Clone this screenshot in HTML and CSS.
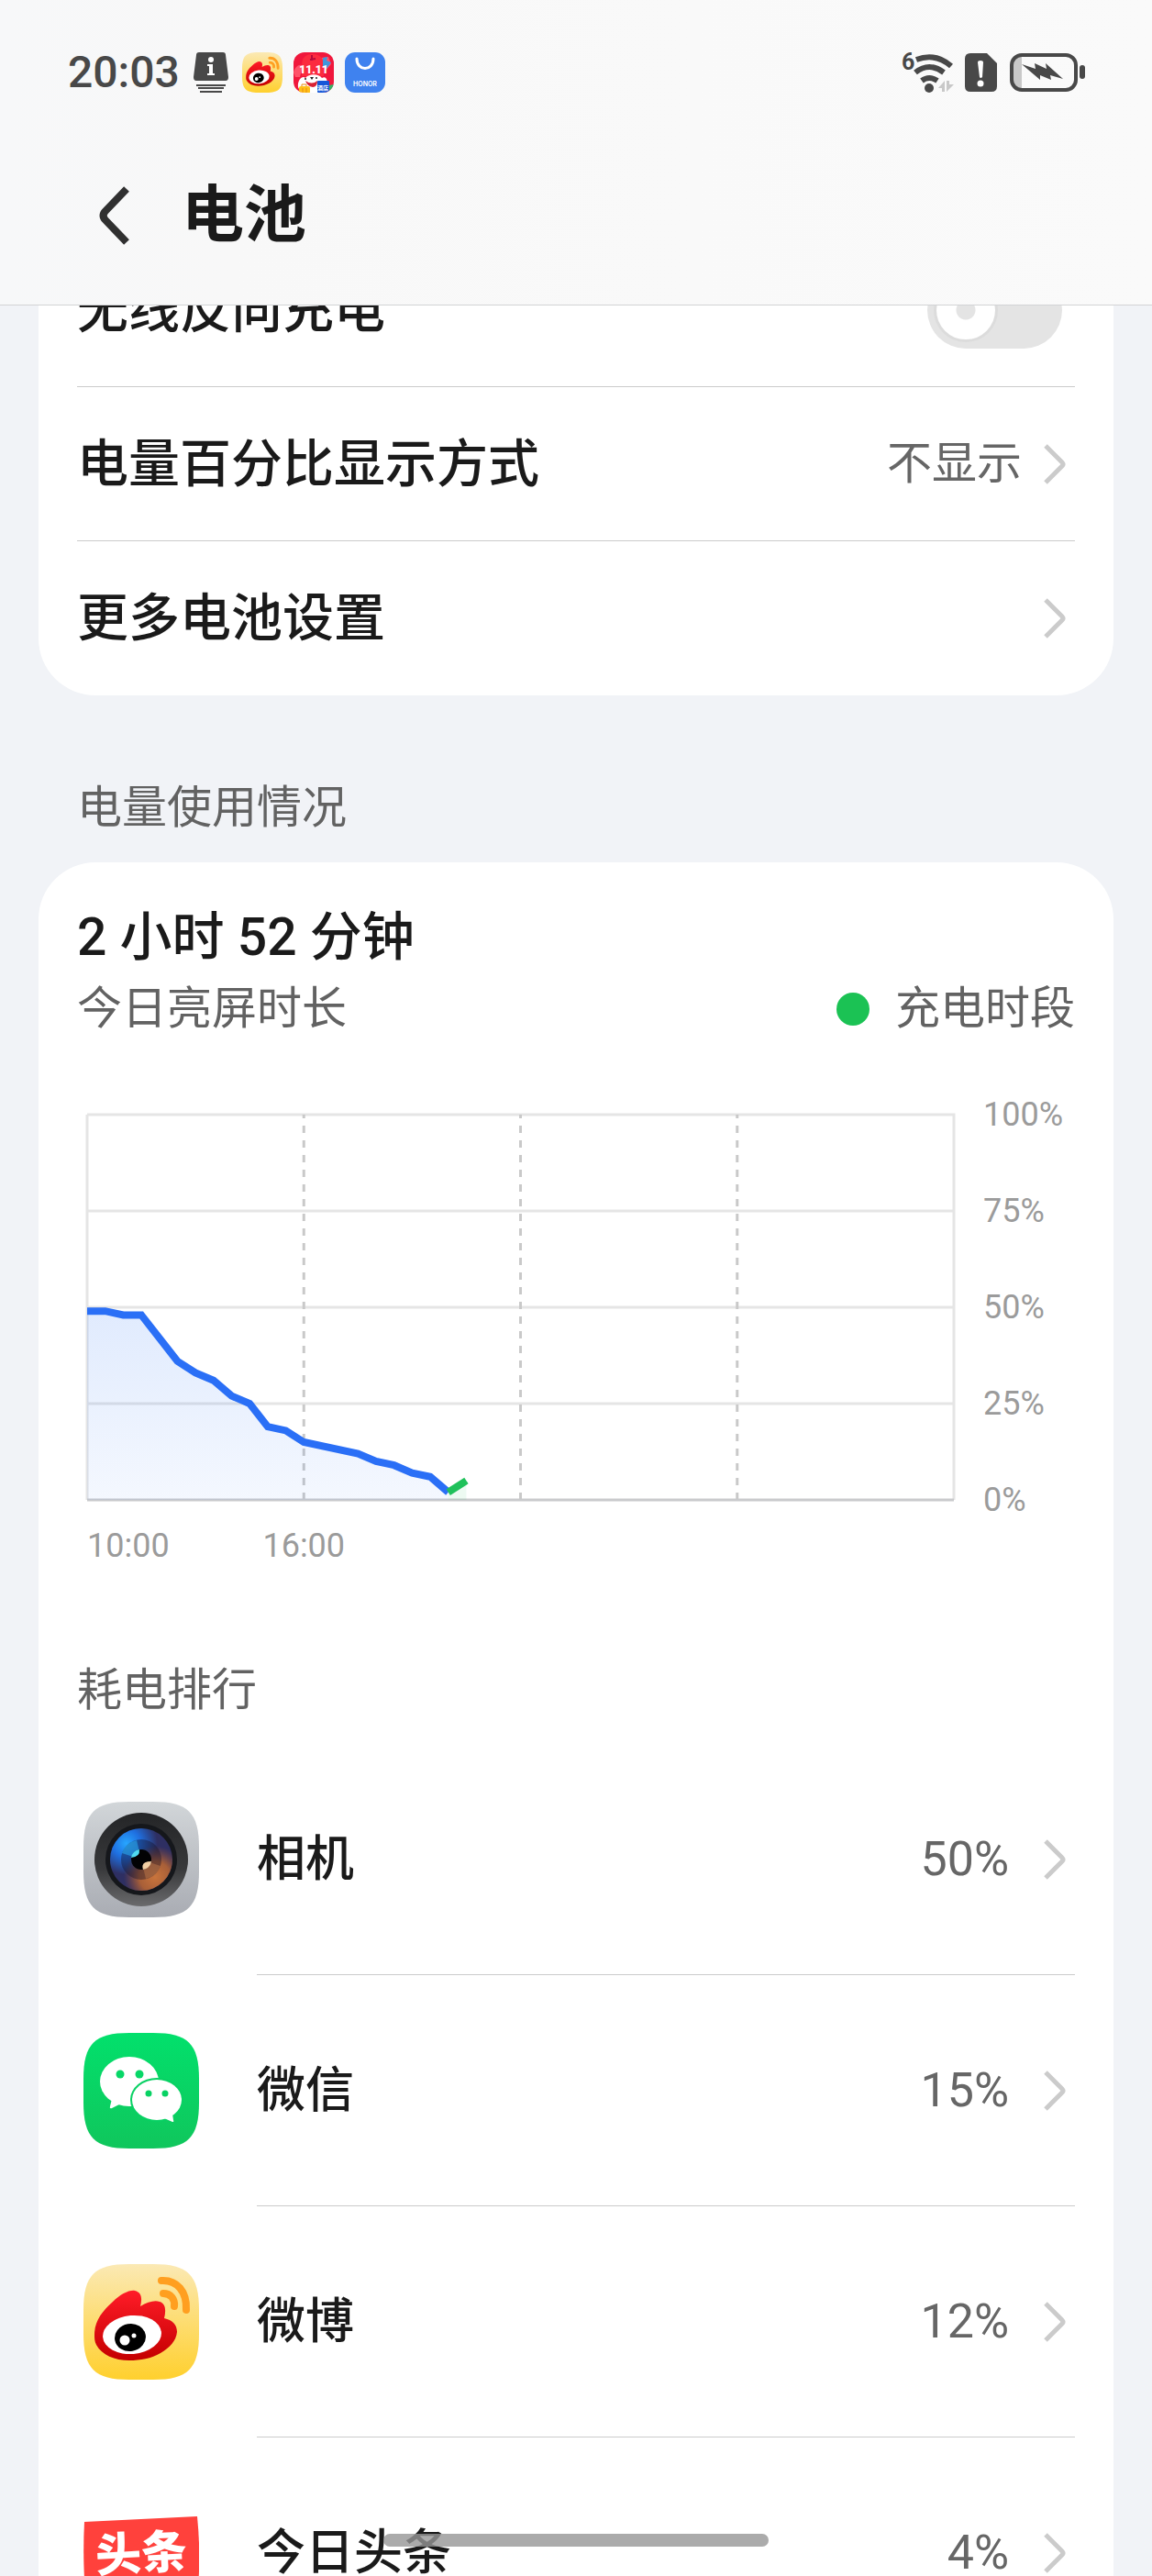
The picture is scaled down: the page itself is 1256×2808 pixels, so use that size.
FILE: index.html
```html
<!DOCTYPE html>
<html lang="zh-CN">
<head>
    <meta charset="UTF-8">
    <meta name="viewport" content="width=device-width, initial-scale=1.0">
    <title>电池</title>
    <link rel="stylesheet" href="styles.css">
</head>
<body>
    <!-- Iconos compartidos -->
    <svg class="sprite" aria-hidden="true">
        <defs>
            <linearGradient id="weiboBg" x1="0" y1="0" x2="0" y2="1">
                <stop offset="0" stop-color="#fbe9b4"/>
                <stop offset="1" stop-color="#ffd02e"/>
            </linearGradient>
            <linearGradient id="weiboRed" x1="0" y1="0" x2="0" y2="1">
                <stop offset="0" stop-color="#ff1c28"/>
                <stop offset="1" stop-color="#c40000"/>
            </linearGradient>
        </defs>
        <symbol id="squircle" viewBox="0 0 126 126">
            <path d="M0 50C0 12 12 0 50 0H76C114 0 126 12 126 50V76C126 114 114 126 76 126H50C12 126 0 114 0 76Z"/>
        </symbol>
        <symbol id="chevron" viewBox="0 0 24 44">
            <path d="M2 2L20 20Q22 22 20 24L2 42" fill="none" stroke="#cbcbcb" stroke-width="5"/>
        </symbol>
        <symbol id="weibo" viewBox="0 0 126 126">
            <path d="M0 50C0 12 12 0 50 0H76C114 0 126 12 126 50V76C126 114 114 126 76 126H50C12 126 0 114 0 76Z" fill="url(#weiboBg)"/>
            <path d="M12 77C12 62 20 52 32 41C40 33 50 28 56 29C64 31 64 38 62 46C70 41 78 39 83 41C90 43 90 51 88 59C97 61 102 66 102 74C101 84 94 91 84 97C74 103 62 105 50 105C34 105 20 99 14 88C12 84 12 81 12 77Z" fill="url(#weiboRed)"/>
            <ellipse cx="53" cy="77" rx="32" ry="21" transform="rotate(-5 53 77)" fill="#fff"/>
            <ellipse cx="51" cy="80" rx="17" ry="15" transform="rotate(-10 51 80)" fill="#000"/>
            <circle cx="45" cy="83" r="5.5" fill="#fff"/>
            <circle cx="55" cy="78" r="2.5" fill="#fff"/>
            <path d="M85 18C102 17 113 30 112 50M87 32C95 32 100 38 99 46" fill="none" stroke="#ff9f20" stroke-width="8" stroke-linecap="round"/>
        </symbol>
    </svg>

    <header class="header">
        <div class="status-bar">
            <span class="clock">20:03</span>
            <svg class="status-icon" viewBox="0 0 44 44">
                <path d="M9 0H35Q38 0 38 3L41 27Q41 31 38 31H6Q3 31 3 27L6 3Q6 0 9 0Z" fill="#484848"/>
                <path d="M6 36H38M8 39H36M10 43H34" stroke="#484848" stroke-width="2"/>
                <circle cx="22" cy="8" r="3" fill="#fff"/>
                <path d="M18 13H24V23H26V25H18V23H20V15H18Z" fill="#fff"/>
            </svg>
            <svg class="status-icon"><use href="#weibo"/></svg>
            <svg class="status-icon" viewBox="0 0 44 44">
                <clipPath id="tripClip"><rect width="44" height="44" rx="12"/></clipPath>
                <g clip-path="url(#tripClip)">
                    <rect width="44" height="44" fill="#f0173c"/>
                    <path d="M0 22C2 15 7 12 10 15L7 27H2ZM30 6L38 5L41 13L35 20Z" fill="#ff5269"/>
                    <path d="M9 26V14C9 5 14 2 21 2S33 6 33 14V26Z" fill="#fb2b3f"/>
                    <path d="M32 6L37 5L36 9L41 11L36 18L32 15Z" fill="#4195dc"/>
                    <path d="M18 8L24 7M20 3V9" stroke="#b7093c" stroke-width="2" fill="none"/>
                    <text x="22" y="23" text-anchor="middle" class="trip-text">11.11</text>
                    <path d="M5 38C4 30 10 25 13 28C17 23 27 23 31 28C36 25 38 31 36 39L34 44H8Z" fill="#fff"/>
                    <path d="M13 31Q20 36 26 31Q26 38 21 38Q15 37 13 31Z" fill="#d92234"/>
                    <circle cx="13" cy="29" r="1" fill="#222"/>
                    <circle cx="25" cy="28" r="1" fill="#222"/>
                    <path d="M18 27H22L20 30Z" fill="#222"/>
                    <path d="M38 36L44 35V44H38Z" fill="#30b563"/>
                    <rect x="6" y="37" width="12" height="8" rx="2" fill="#ffbf18"/>
                    <path d="M9 37V35H14V37M10 39V44M14 39V44" stroke="#e98b10" fill="none"/>
                    <rect x="26" y="31" width="13" height="13" rx="1" fill="#1556d8"/>
                    <text x="32" y="41" text-anchor="middle" class="hotel-text">酒店</text>
                </g>
            </svg>
            <svg class="status-icon" viewBox="0 0 44 44">
                <rect width="44" height="44" rx="11" fill="#3f82ef"/>
                <path d="M13 7C13 21 31 21 31 7" fill="none" stroke="#fff" stroke-width="3" stroke-linecap="round"/>
                <text x="22" y="37" text-anchor="middle" class="honor-text">HONOR</text>
            </svg>

            <svg class="wifi-icon" viewBox="0 0 56 44">
                <text x="-1" y="19" class="wifi-text">6</text>
                <g fill="none" stroke="#484848" stroke-width="6">
                    <path d="M15 8Q36 0 53 15"/>
                    <path d="M14 22Q29 10 45 22"/>
                    <path d="M21 31Q29 25 38 31"/>
                </g>
                <circle cx="29" cy="39" r="5" fill="#484848"/>
                <path d="M46 31V43H43V39H39ZM48 31H51V35H56L48 43Z" fill="#c8c8c8"/>
            </svg>
            <svg class="sim-icon" viewBox="0 0 36 44">
                <path d="M6 1H24L35 12V37Q35 43 29 43H6Q0 43 0 37V7Q0 1 6 1Z" fill="#484848"/>
                <path d="M14 11Q14 9 17 9T20 11L19 27Q17 29 16 27Z" fill="#fff"/>
                <circle cx="17" cy="34" r="3.5" fill="#fff"/>
            </svg>
            <svg class="battery-icon" viewBox="0 0 84 44">
                <path d="M14 4V40H10Q4 40 4 34V10Q4 4 10 4Z" fill="#c8c8c8"/>
                <rect x="3" y="3" width="70" height="38" rx="11" fill="none" stroke="#484848" stroke-width="4"/>
                <rect x="77" y="14" width="6" height="15" rx="3" fill="#484848"/>
                <path d="M14 13L29 18L28 12L41 18L40 12L59 29L45 25L46 30L34 25V30Z" fill="#484848"/>
            </svg>
        </div>
        <div class="title-bar">
            <button type="button" class="back" aria-label="返回">
                <svg viewBox="0 0 34 64"><path d="M30 3L7 27Q2 32 7 37L30 61" fill="none" stroke="#303030" stroke-width="8"/></svg>
            </button>
            <h1>电池</h1>
        </div>
    </header>

    <main class="content">
        <section class="card settings">
            <div class="row">
                <label for="reverse">无线反向充电</label>
                <input type="checkbox" id="reverse" class="switch">
            </div>
            <a class="row" href="#">
                <span>电量百分比显示方式</span>
                <span class="hint">不显示</span>
                <svg class="chevron"><use href="#chevron"/></svg>
            </a>
            <a class="row" href="#">
                <span>更多电池设置</span>
                <svg class="chevron"><use href="#chevron"/></svg>
            </a>
        </section>

        <h2 class="section-title">电量使用情况</h2>

        <section class="card usage">
            <p class="screen-time">2 小时 52 分钟</p>
            <div class="legend">
                <span>今日亮屏时长</span>
                <span class="legend-key">充电时段</span>
            </div>

            <div class="chart">
                <svg class="plot" viewBox="0 0 48 100" preserveAspectRatio="none">
                    <defs>
                        <linearGradient id="area" x1="0" y1="0" x2="0" y2="1">
                            <stop offset="0" stop-color="#256ff5" stop-opacity="0.14"/>
                            <stop offset="1" stop-color="#256ff5" stop-opacity="0.05"/>
                        </linearGradient>
                    </defs>
                    <path class="grid" d="M0 0H48V100M0 100V0M0 25H48M0 50H48M0 75H48"/>
                    <path class="dashed" d="M12 0V100M24 0V100M36 0V100"/>
                    <path class="base" d="M0 100H48"/>
                    <path fill="url(#area)" d="M0 51H1L2 52H3L5 64L6 67L7 69L8 73L9 75L10 81L11 82L12 85L15 88L16 90L17 91L18 93L19 94L20 98V100H0Z"/>
                    <path fill="#1dc355" fill-opacity="0.08" d="M20 98L21 95V100H20Z"/>
                    <path class="line" d="M0 51H1L2 52H3L5 64L6 67L7 69L8 73L9 75L10 81L11 82L12 85L15 88L16 90L17 91L18 93L19 94L20 98"/>
                    <path class="line charging" d="M20 98L21 95"/>
                </svg>
                <div class="y-axis">
                    <span>100%</span>
                    <span>75%</span>
                    <span>50%</span>
                    <span>25%</span>
                    <span>0%</span>
                </div>
                <div class="x-axis">
                    <span>10:00</span>
                    <span class="tick">16:00</span>
                </div>
            </div>

            <h3 class="rank-title">耗电排行</h3>
            <div class="apps">
                <a class="app" href="#">
                    <svg class="app-icon" viewBox="0 0 126 126">
                        <defs>
                            <linearGradient id="camBg" x1="0" y1="0" x2="0" y2="1">
                                <stop offset="0" stop-color="#d2d6d9"/>
                                <stop offset="1" stop-color="#a9acb3"/>
                            </linearGradient>
                            <linearGradient id="camRing" x1="0" y1="0" x2="0" y2="1">
                                <stop offset="0" stop-color="#242527"/>
                                <stop offset="0.6" stop-color="#38393b"/>
                                <stop offset="1" stop-color="#6a6a6c"/>
                            </linearGradient>
                            <radialGradient id="camBlue" cx="0.26" cy="0.24" r="0.5">
                                <stop offset="0" stop-color="#27a6ff"/>
                                <stop offset="0.45" stop-color="#1f6fe0"/>
                                <stop offset="1" stop-color="#1f6fe0" stop-opacity="0"/>
                            </radialGradient>
                            <radialGradient id="camOrange" cx="0.72" cy="0.78" r="0.5">
                                <stop offset="0" stop-color="#c8743c"/>
                                <stop offset="0.5" stop-color="#a85f38"/>
                                <stop offset="1" stop-color="#8a4a38" stop-opacity="0"/>
                            </radialGradient>
                        </defs>
                        <use href="#squircle" fill="url(#camBg)"/>
                        <circle cx="63" cy="63" r="51" fill="url(#camRing)"/>
                        <circle cx="63" cy="63" r="39" fill="#15171b"/>
                        <circle cx="63" cy="63" r="34" fill="#2e2f62"/>
                        <circle cx="63" cy="63" r="34" fill="url(#camBlue)"/>
                        <circle cx="63" cy="63" r="34" fill="url(#camOrange)"/>
                        <circle cx="63" cy="63" r="22" fill="#141127" fill-opacity="0.4"/>
                        <path d="M63 63L42 56A22 22 0 0 1 58 42Z" fill="#2cb5ff" fill-opacity="0.5"/>
                        <path d="M63 63L84 70A22 22 0 0 1 68 84Z" fill="#c07748" fill-opacity="0.5"/>
                        <circle cx="63" cy="63" r="11" fill="#020203"/>
                        <path d="M52 61A11 11 0 0 1 61 52Q62 60 52 61Z" fill="#50d9f0"/>
                        <path d="M74 65A11 11 0 0 1 65 74Q62 65 74 65Z" fill="#f2cfa4"/>
                    </svg>
                    <span class="app-info">
                        <span>相机</span>
                        <span class="percent">50%</span>
                        <svg class="chevron"><use href="#chevron"/></svg>
                    </span>
                </a>
                <a class="app" href="#">
                    <svg class="app-icon" viewBox="0 0 126 126">
                        <defs>
                            <linearGradient id="wechatBg" x1="0" y1="0" x2="0" y2="1">
                                <stop offset="0" stop-color="#02e06c"/>
                                <stop offset="1" stop-color="#10c65c"/>
                            </linearGradient>
                        </defs>
                        <use href="#squircle" fill="url(#wechatBg)"/>
                        <ellipse cx="50" cy="53" rx="32" ry="27" fill="#fff"/>
                        <path d="M31 72L29 80Q28 83 31 82L41 77Z" fill="#fff"/>
                        <ellipse cx="80" cy="73" rx="29" ry="24" fill="#08d163"/>
                        <ellipse cx="80" cy="73" rx="27" ry="22" fill="#fff"/>
                        <path d="M88 93L97 97Q99 97 98 95L97 88Z" fill="#fff"/>
                        <circle cx="40" cy="45" r="4.5" fill="#08d767"/>
                        <circle cx="61" cy="45" r="4.5" fill="#08d767"/>
                        <circle cx="71" cy="66" r="3.5" fill="#08d263"/>
                        <circle cx="89" cy="66" r="3.5" fill="#08d263"/>
                    </svg>
                    <span class="app-info">
                        <span>微信</span>
                        <span class="percent">15%</span>
                        <svg class="chevron"><use href="#chevron"/></svg>
                    </span>
                </a>
                <a class="app" href="#">
                    <svg class="app-icon"><use href="#weibo"/></svg>
                    <span class="app-info">
                        <span>微博</span>
                        <span class="percent">12%</span>
                        <svg class="chevron"><use href="#chevron"/></svg>
                    </span>
                </a>
                <a class="app" href="#">
                    <svg class="app-icon" viewBox="0 0 126 126">
                        <path d="M1 29L124 23Q128 63 125 100L2 106Q-1 68 1 29Z" fill="#ff413c"/>
                        <text x="63" y="81" text-anchor="middle" transform="rotate(-3 64 64)" class="toutiao-text">头条</text>
                    </svg>
                    <span class="app-info">
                        <span>今日头条</span>
                        <span class="percent">4%</span>
                        <svg class="chevron"><use href="#chevron"/></svg>
                    </span>
                </a>
            </div>
        </section>
    </main>

    <div class="home-bar"></div>
</body>
</html>
```
FILE: styles.css
```css
*, *::before {
    box-sizing: border-box;
}
body {
    margin: 0;
    height: 100vh;
    overflow: hidden;
    background-color: #f1f3f7;
    color: #1a1a1a;
    font-family: Roboto, "Noto Sans CJK SC", sans-serif;
}
h1, h2, h3, p {
    margin: 0;
}
a {
    color: inherit;
    text-decoration: none;
}
svg {
    display: block;
    flex-shrink: 0;
}
.sprite {
    position: absolute;
    width: 0;
    height: 0;
}

/* Cabecera */
.header {
    position: fixed;
    top: 0;
    left: 0;
    right: 0;
    z-index: 1;
    padding-bottom: 20px;
    background: linear-gradient(to right, #f7f8f9, #f8f8f8 20%, #fafafa);
    border-bottom: 1px solid #d2d3d5;
}
.status-bar {
    display: flex;
    align-items: center;
    gap: 12px;
    height: 158px;
    padding: 0 72px 0 74px;
}
.clock {
    width: 122px;
    font-size: 48px;
    font-weight: 500;
    line-height: 48px;
    color: #484848;
}
.status-icon {
    width: 44px;
    height: 44px;
}
.wifi-icon {
    width: 56px;
    height: 44px;
    margin-left: auto;
    overflow: visible;
}
.sim-icon {
    width: 36px;
    height: 44px;
}
.battery-icon {
    width: 84px;
    height: 44px;
}
.wifi-text {
    font-size: 25px;
    font-weight: 700;
    fill: #484848;
}
.trip-text {
    font-size: 12px;
    font-weight: 900;
    fill: #fff;
}
.hotel-text {
    font-size: 6px;
    font-weight: 700;
    fill: #fff;
}
.honor-text {
    font-family: Inter, sans-serif;
    font-size: 7px;
    font-weight: 600;
    fill: #fff;
}
.title-bar {
    display: flex;
    align-items: center;
    gap: 56px;
    height: 154px;
    padding-left: 108px;
}
.back {
    width: 34px;
    height: 64px;
    padding: 0;
    border: none;
    background: none;
    cursor: pointer;
}
h1 {
    font-size: 68px;
    font-weight: 700;
    line-height: 80px;
}

/* Contenido */
.content {
    height: 100%;
    padding: 254px 42px 0;
    overflow-y: auto;
    scrollbar-width: none;
}
.card {
    padding: 0 42px;
    border-radius: 62px;
    background-color: #fff;
}
.row {
    display: flex;
    align-items: center;
    justify-content: space-between;
    height: 168px;
    padding-right: 10px;
    border-bottom: 1px solid #cbcbcb;
    font-size: 56px;
    font-weight: 500;
    line-height: 80px;
}
.row:last-child {
    border-bottom: none;
}
.hint {
    margin-left: auto;
    margin-right: 24px;
    font-size: 49px;
    font-weight: 400;
    color: #666;
}
.chevron {
    width: 24px;
    height: 44px;
}
.switch {
    appearance: none;
    width: 147px;
    height: 84px;
    margin: 0 4px 0 0;
    padding: 7px;
    border: none;
    border-radius: 42px;
    background-color: #e4e4e4;
    cursor: pointer;
}
.switch::before {
    content: "";
    display: block;
    width: 70px;
    height: 70px;
    border: 3px solid #dcdcdc;
    border-radius: 50%;
    background: radial-gradient(circle, #e4e4e4 10px, #fff 11px);
}
.switch:checked::before {
    margin-left: auto;
}
.section-title, .rank-title, .legend {
    font-size: 49px;
    font-weight: 400;
    line-height: 76px;
    color: #626262;
}
.section-title {
    margin: 85px 42px 21px;
}

/* Uso de batería */
.usage {
    padding-top: 42px;
}
.screen-time {
    font-size: 57px;
    font-weight: 500;
    line-height: 80px;
}
.legend {
    display: flex;
    justify-content: space-between;
}
.legend-key {
    display: flex;
    align-items: center;
    gap: 28px;
}
.legend-key::before {
    content: "";
    width: 36px;
    height: 36px;
    border-radius: 50%;
    background-color: #1bc254;
}
.chart {
    display: grid;
    grid-template-columns: 1fr 100px;
    column-gap: 32px;
    row-gap: 30px;
    margin: 77px 0 100px 11px;
    font-size: 36px;
    line-height: 40px;
    color: #9b9b9b;
}
.plot {
    width: 100%;
    height: 420px;
    overflow: visible;
}
.plot path {
    vector-effect: non-scaling-stroke;
}
.grid, .dashed, .base, .line {
    fill: none;
    stroke-width: 3px;
}
.grid {
    stroke: #e5e5e5;
}
.dashed {
    stroke: #c9c9c9;
    stroke-dasharray: 8 8;
    stroke-dashoffset: 4px;
}
.base {
    stroke: #c9cacc;
}
.line {
    stroke: #2a6ff6;
    stroke-width: 8px;
}
.charging {
    stroke: #1fc15a;
}
.y-axis {
    display: flex;
    flex-direction: column;
    justify-content: space-between;
    margin: -20px 0;
}
.x-axis {
    display: grid;
    grid-template-columns: repeat(8, 1fr);
}
.tick {
    grid-column: span 2;
    text-align: center;
}

/* Ranking de aplicaciones */
.rank-title {
    margin-bottom: 20px;
}
.app {
    display: flex;
    align-items: center;
    gap: 63px;
    height: 252px;
    padding-left: 7px;
    font-size: 53px;
    font-weight: 500;
    line-height: 80px;
}
.app-icon {
    width: 126px;
    height: 126px;
}
.app-info {
    display: flex;
    flex: 1;
    align-items: center;
    height: 100%;
    padding-right: 10px;
    border-bottom: 1px solid #cbcbcb;
}
.app:last-child .app-info {
    border-bottom: none;
}
.percent {
    margin-left: auto;
    margin-right: 38px;
    font-size: 52px;
    font-weight: 400;
    color: #666;
}
.toutiao-text {
    font-size: 50px;
    font-weight: 900;
    fill: #fff;
}
.home-bar {
    position: fixed;
    left: 0;
    right: 0;
    bottom: 32px;
    z-index: 1;
    width: 420px;
    max-width: 60%;
    height: 14px;
    margin: 0 auto;
    border-radius: 7px;
    background-color: rgba(150, 150, 150, 0.8);
}
```
